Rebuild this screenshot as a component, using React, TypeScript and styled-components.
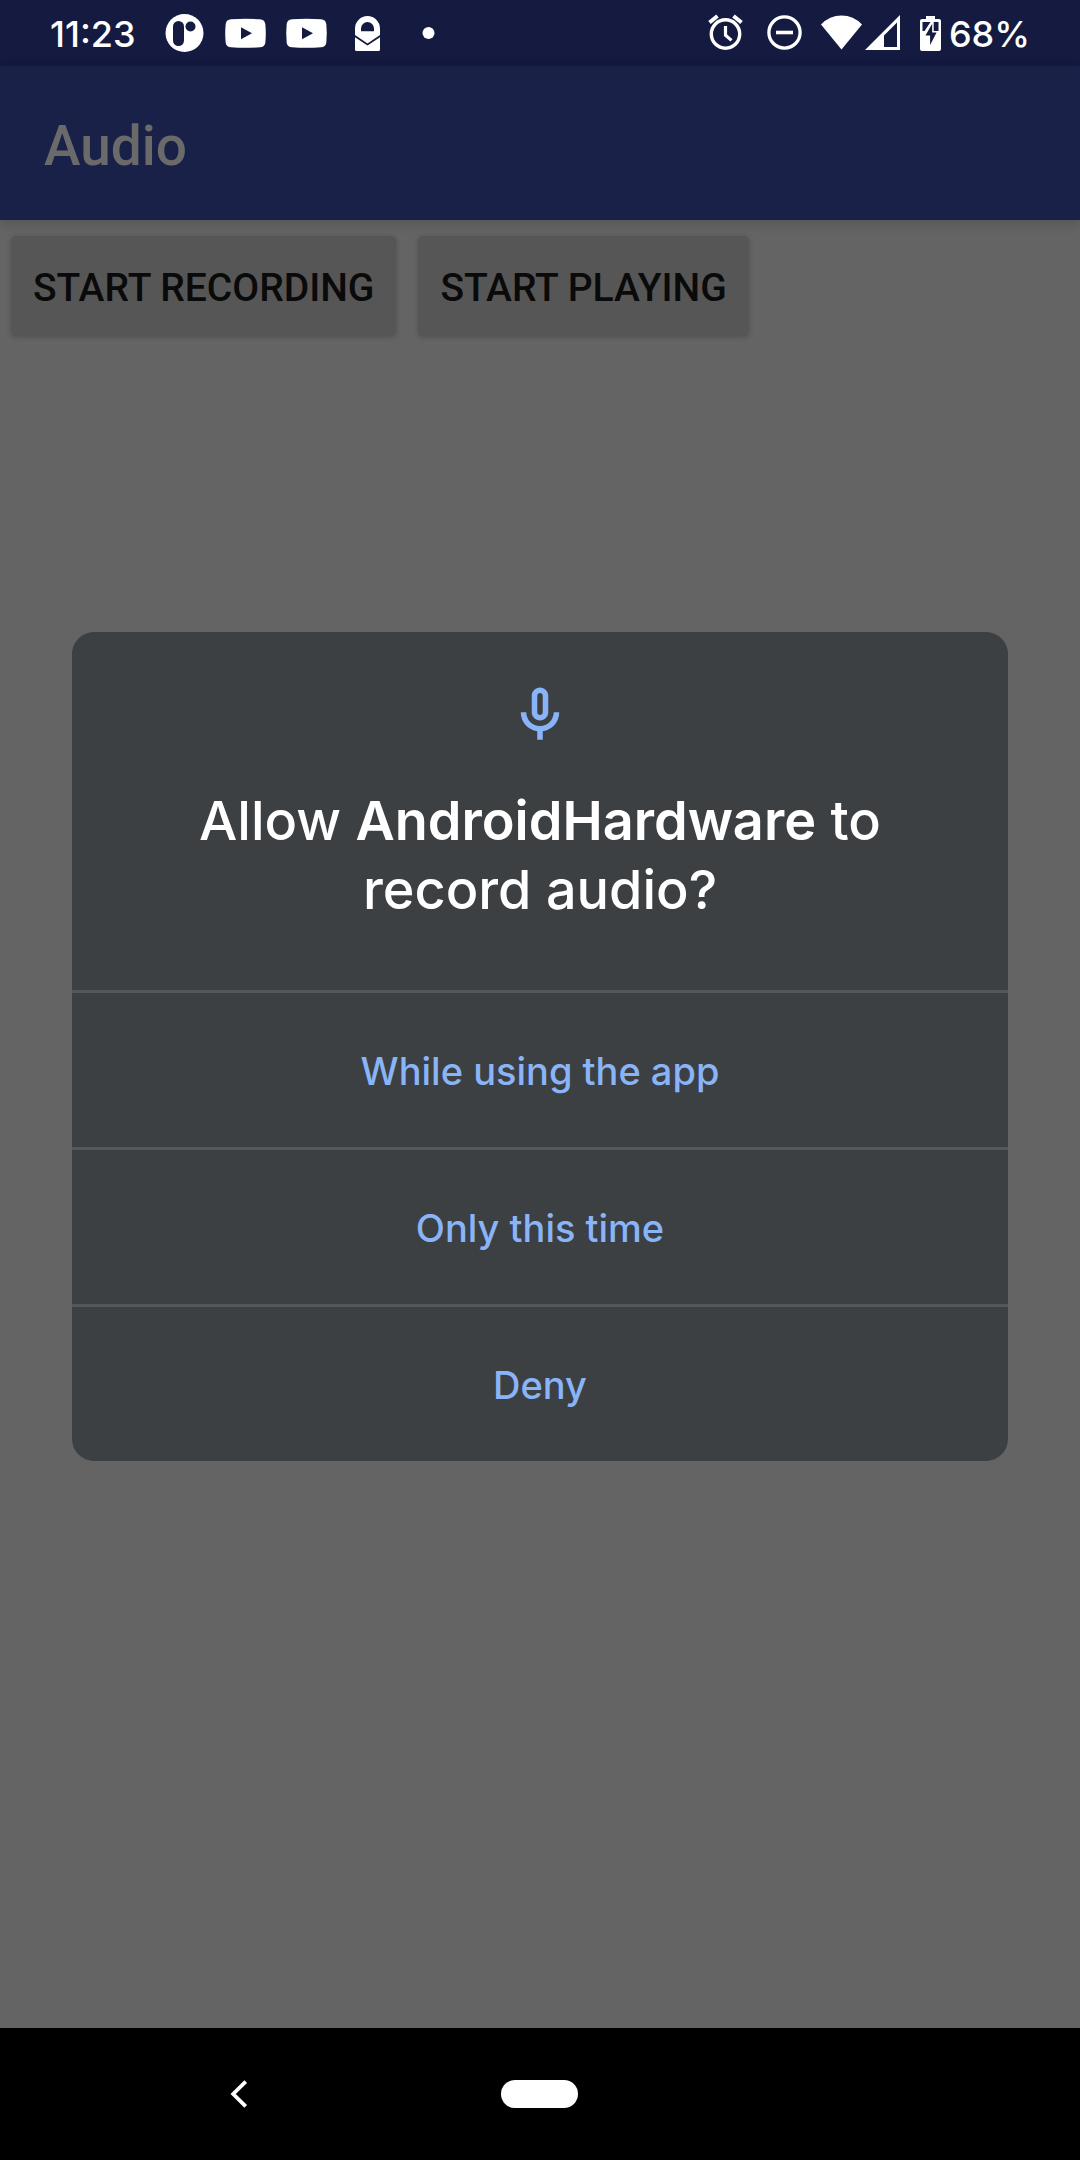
import React from 'react';
import styled, { createGlobalStyle } from 'styled-components';

const GlobalStyle = createGlobalStyle`
  *, *::before, *::after { box-sizing: border-box; }
  body { margin: 0; background: #646464; }
  button { border: 0; margin: 0; padding: 0; background: none; font: inherit; cursor: pointer; }
  svg { display: block; flex: none; }
`;

const systemFont = `Inter, "Open Sans", sans-serif`;
const appFont = `Roboto, "Liberation Sans", sans-serif`;

const Screen = styled.div`
  display: flex;
  flex-direction: column;
  min-height: 100vh;
  background: #646464;
`;

const StatusBar = styled.header`
  display: flex;
  align-items: center;
  justify-content: space-between;
  height: 66px;
  padding: 2px 50px 0;
  background: #141a40;
  color: #fff;
  font: 500 36px/64px ${systemFont};
`;

const StatusGroup = styled.div`
  display: flex;
  align-items: center;
  height: 64px;
`;

const StatusText = styled.span<{ $width: number }>`
  min-width: ${(p) => p.$width}px;
  white-space: nowrap;
`;

const Stage = styled.div`
  position: relative;
  display: flex;
  flex-direction: column;
  flex: 1;
`;

const AppBar = styled.div`
  display: flex;
  align-items: center;
  height: 154px;
  padding: 6px 44px 0;
  background: #1a2148;
  box-shadow: 0 2px 12px rgba(0, 0, 0, 0.18);
`;

const AppTitle = styled.h1`
  margin: 0;
  color: #6a6a6a;
  font: 500 55px/64px ${appFont};
`;

const Controls = styled.main`
  display: flex;
  flex-wrap: wrap;
  gap: 22px;
  padding: 16px 11px;
`;

const RaisedButton = styled.button`
  height: 100px;
  padding: 4px 22px 0;
  border-radius: 5px;
  background: #565656;
  color: #0a0a0a;
  font: 500 39px/44px ${appFont};
  text-transform: uppercase;
  box-shadow: 0 1px 5px rgba(0, 0, 0, 0.22);
`;

const Scrim = styled.div`
  position: absolute;
  inset: 0;
  display: flex;
  align-items: center;
  justify-content: center;
  padding: 0 72px 2px;
`;

const Dialog = styled.section`
  width: 100%;
  border-radius: 22px;
  overflow: hidden;
  background: #3c4043;
  font-family: ${systemFont};
`;

const DialogHeader = styled.div`
  display: flex;
  flex-direction: column;
  align-items: center;
  gap: 38px;
  padding: 50px 66px 66px;
`;

const DialogTitle = styled.h2`
  max-width: 720px;
  margin: 0;
  color: #fff;
  font-size: 54px;
  font-weight: 500;
  line-height: 69px;
  text-align: center;
`;

const AppName = styled.strong`
  font-weight: 600;
`;

const ChoiceButton = styled.button`
  display: block;
  width: 100%;
  height: 157px;
  padding-top: 2px;
  border-top: 3px solid #54585b;
  color: #8ab4f8;
  font-size: 38px;
  font-weight: 500;
  line-height: 50px;
`;

const NavBar = styled.nav`
  display: grid;
  grid-template-columns: repeat(3, 1fr);
  height: 132px;
  padding: 0 88px;
  background: #000;
`;

const NavButton = styled.button`
  display: flex;
  align-items: center;
  justify-content: center;
`;

const HomePill = styled.span`
  width: 77px;
  height: 28px;
  border-radius: 14px;
  background: #fff;
`;

const BadgeIcon = () => (
  <svg width="61" height="64" viewBox="0 2 61 64">
    <circle cx="30.5" cy="33" r="19" fill="#fff" />
    <rect x="19" y="21" width="11" height="25" rx="5.5" fill="#141a40" />
    <circle cx="36.5" cy="26.5" r="5" fill="#141a40" />
  </svg>
);

const VideoIcon = () => (
  <svg width="61" height="64" viewBox="0 2 61 64">
    <path
      fill="#fff"
      fillRule="evenodd"
      d="M16 19.3Q30.5 18.3 45 19.3Q49.6 19.6 50.3 24Q51.3 33.3 50.3 43Q49.6 47 45 47.3Q30.5 48.3 16 47.3Q11.4 47 10.7 43Q9.7 33.3 10.7 24Q11.4 19.6 16 19.3ZM26 27.3V39.3L37 33.3Z"
    />
  </svg>
);

const MailLockIcon = () => (
  <svg width="61" height="64" viewBox="0 2 61 64">
    <path
      fill="#fff"
      fillRule="evenodd"
      d="M18 35V28.5a12.5 12.5 0 0 1 25 0V35L30.5 43.5ZM24 31.3H37V28.5a6.5 6.5 0 0 0-13 0Z"
    />
    <path fill="#fff" d="M18 37.2L30.5 45.6L43 37.2V49.5a1.5 1.5 0 0 1-1.5 1.5h-22a1.5 1.5 0 0 1-1.5-1.5Z" />
  </svg>
);

const MoreDot = () => (
  <svg width="61" height="64" viewBox="0 2 61 64">
    <circle cx="30.5" cy="33" r="6" fill="#fff" />
  </svg>
);

const AlarmIcon = () => (
  <svg width="59" height="64" viewBox="0 2 59 64" fill="none" stroke="#fff">
    <circle cx="29.5" cy="34" r="14.2" strokeWidth="3.4" />
    <path d="M29.5 26v9.2l6 5.2" strokeWidth="3.2" />
    <path d="M13.5 22.5l8-6.5M45.5 22.5l-8-6.5" strokeWidth="4" />
  </svg>
);

const DoNotDisturbIcon = () => (
  <svg width="59" height="64" viewBox="0 2 59 64" fill="none" stroke="#fff">
    <circle cx="29.5" cy="32.5" r="15.6" strokeWidth="3.3" />
    <path d="M21 32.5h17" strokeWidth="3.6" />
  </svg>
);

const WifiIcon = () => (
  <svg width="50" height="64" viewBox="0 2 50 64">
    <path fill="#fff" d="M7 24.5Q15.5 15.500 27.5 15.5T48 24.5L27.5 49.5Z" />
  </svg>
);

const SignalIcon = () => (
  <svg width="40" height="64" viewBox="0 2 40 64">
    <path fill="#fff" fillRule="evenodd" d="M1 50L36 15V50ZM20 47H33V22.5L20 35.5Z" />
  </svg>
);

const BatteryIcon = () => (
  <svg width="45" height="64" viewBox="0 2 45 64">
    <path
      fill="#fff"
      d="M22 16h9v3h4q2 0 2 2v28q0 2-2 2H18q-2 0-2-2V21q0-2 2-2h4Z"
    />
    <path fill="#141a40" d="M18.5 22h8L20.5 31h-2ZM29.5 22h5v9h-5Z" />
    <path fill="#141a40" stroke="#fff" strokeWidth="1.2" d="M28.8 21.5L20.5 36h5v11.5L33.5 32h-4.7Z" />
  </svg>
);

const MicIcon = () => (
  <svg width="66" height="66" viewBox="0 0 24 24" fill="#8ab4f8">
    <path d="M12 14c1.66 0 3-1.34 3-3V5c0-1.66-1.34-3-3-3S9 3.34 9 5v6c0 1.66 1.34 3 3 3zm-1-9c0-.55.45-1 1-1s1 .45 1 1v6c0 .55-.45 1-1 1s-1-.45-1-1V5zm6 6c0 2.76-2.24 5-5 5s-5-2.24-5-5H5c0 3.53 2.61 6.43 6 6.92V21h2v-3.08c3.39-.49 6-3.39 6-6.92h-2z" />
  </svg>
);

const BackIcon = () => (
  <svg width="18" height="28" viewBox="0 0 18 28" fill="none" stroke="#fff" strokeWidth="3.8">
    <path d="M15.7 1.6L3.2 14L15.7 26.4" />
  </svg>
);

const choices = ['While using the app', 'Only this time', 'Deny'];

export default function App() {
  return (
    <>
      <GlobalStyle />
      <Screen>
        <StatusBar>
          <StatusGroup>
            <StatusText $width={104}>11:23</StatusText>
            <BadgeIcon />
            <VideoIcon />
            <VideoIcon />
            <MailLockIcon />
            <MoreDot />
          </StatusGroup>
          <StatusGroup>
            <AlarmIcon />
            <DoNotDisturbIcon />
            <WifiIcon />
            <SignalIcon />
            <BatteryIcon />
            <StatusText $width={76}>68%</StatusText>
          </StatusGroup>
        </StatusBar>
        <Stage>
          <AppBar>
            <AppTitle>Audio</AppTitle>
          </AppBar>
          <Controls>
            <RaisedButton type="button">Start recording</RaisedButton>
            <RaisedButton type="button">Start playing</RaisedButton>
          </Controls>
          <Scrim>
            <Dialog role="dialog" aria-modal="true" aria-labelledby="permission-title">
              <DialogHeader>
                <MicIcon />
                <DialogTitle id="permission-title">
                  Allow <AppName>AndroidHardware</AppName>
                  {' to '}
                  {'record audio?'}
                </DialogTitle>
              </DialogHeader>
              {choices.map((choice) => (
                <ChoiceButton type="button" key={choice}>
                  {choice}
                </ChoiceButton>
              ))}
            </Dialog>
          </Scrim>
        </Stage>
        <NavBar>
          <NavButton type="button" aria-label="Back">
            <BackIcon />
          </NavButton>
          <NavButton type="button" aria-label="Home">
            <HomePill />
          </NavButton>
        </NavBar>
      </Screen>
    </>
  );
}
